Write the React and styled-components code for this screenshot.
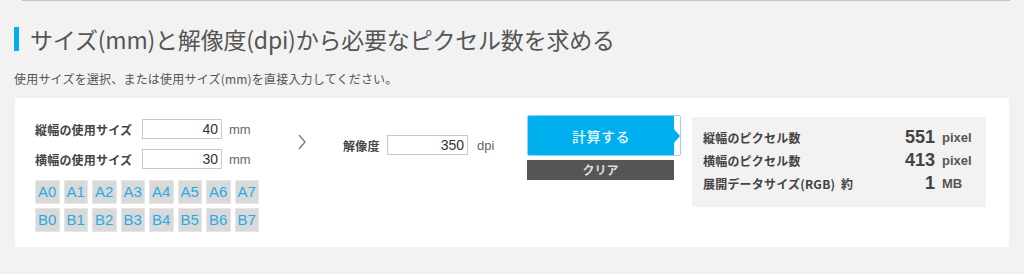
import styled, { createGlobalStyle } from 'styled-components';

const GlobalStyle = createGlobalStyle`
  body {
    margin: 0;
    background: #f2f2f2;
    font-family: "Noto Sans CJK JP", "Noto Sans", sans-serif;
    color: #555;
  }
`;

const Page = styled.div`
  width: 1010px;
  padding-left: 14px;
  box-sizing: border-box;
`;

const TopRule = styled.div`
  margin-left: 8px;
  height: 1px;
  background: #c4c4c4;
`;

const Heading = styled.h2`
  margin: 26px 0 0;
  padding-left: 11px;
  border-left: 5px solid #00aeef;
  font-size: 23px;
  font-weight: 400;
  line-height: 24px;
  color: #555;
  letter-spacing: -0.2px;
`;

const Lead = styled.p`
  margin: 20px 0 0;
  font-size: 12px;
  line-height: 16px;
  color: #555;
  letter-spacing: 0.2px;
`;

const Panel = styled.div`
  margin: 11px 0 0 1px;
  width: 994px;
  height: 149px;
  box-sizing: border-box;
  padding: 17px 0 0 20px;
  background: #fff;
  display: flex;
  align-items: flex-start;
`;

const SizeColumn = styled.div`
  width: 263px;
  margin-top: 4px;
`;

const FieldRow = styled.div`
  display: flex;
  align-items: center;
  height: 20px;
  margin-bottom: ${(p) => p.$gap || 0}px;
`;

const Label = styled.span`
  width: ${(p) => p.$width}px;
  font-size: 12px;
  font-weight: 700;
  color: #444;
  white-space: nowrap;
  letter-spacing: 0.2px;
`;

const NumberInput = styled.input`
  width: ${(p) => p.$width || 80}px;
  height: 20px;
  box-sizing: border-box;
  border: 1px solid #c8c8c8;
  padding: 0 3px;
  text-align: right;
  font-family: "Liberation Sans", Arial, sans-serif;
  font-size: 14px;
  color: #333;
  outline: none;
`;

const Unit = styled.span`
  margin-left: ${(p) => p.$gap || 7}px;
  font-family: "Liberation Sans", Arial, sans-serif;
  font-size: 13px;
  color: #666;
`;

const PaperGrid = styled.div`
  margin-top: 11px;
  width: 224px;
  display: grid;
  grid-template-columns: repeat(8, 1fr);
  grid-auto-rows: 24px;
  gap: 4px;
`;

const PaperButton = styled.button`
  padding: 0;
  border: 1px solid #e6e6e6;
  background: #d9d9d9;
  color: #2aaae4;
  font-family: "Liberation Sans", Arial, sans-serif;
  font-size: 15px;
  line-height: 22px;
  cursor: pointer;
`;

const Chevron = styled.svg`
  margin-top: 19px;
  flex: none;
`;

const ResolutionGroup = styled.div`
  width: 184px;
  margin: 20px 0 0 37px;
  display: flex;
  align-items: center;
  height: 20px;
`;

const Actions = styled.div`
  width: 154px;
  display: flex;
  flex-direction: column;
`;

const CalcButton = styled.button`
  position: relative;
  height: 41px;
  padding: 0 6px 0 0;
  border: 1px solid #a4cdf4;
  border-radius: 2px;
  background: linear-gradient(to right, #00b0ee calc(100% - 6px), #fff 0);
  color: #eef9fe;
  font-family: inherit;
  font-size: 14px;
  font-weight: 500;
  letter-spacing: 0.5px;
  cursor: pointer;

  &::after {
    content: '';
    position: absolute;
    top: 50%;
    left: calc(100% - 6px);
    margin-top: -7px;
    border-left: 6px solid #00b0ee;
    border-top: 7px solid transparent;
    border-bottom: 7px solid transparent;
  }
`;

const ClearButton = styled.button`
  margin-top: 4px;
  width: 147px;
  height: 20px;
  padding: 0;
  border: none;
  background: #555;
  color: #ddd;
  font-family: inherit;
  font-size: 12px;
  font-weight: 700;
  line-height: 20px;
  cursor: pointer;
`;

const Results = styled.div`
  margin: 2px 0 0 11px;
  width: 294px;
  height: 90px;
  box-sizing: border-box;
  padding: 9px 13px 0 11px;
  background: #f2f2f2;
`;

const ResultRow = styled.div`
  display: grid;
  grid-template-columns: 1fr auto 38px;
  align-items: center;
  height: 23px;
`;

const ResultLabel = styled.span`
  font-size: 12px;
  font-weight: 700;
  color: #444;
  white-space: pre;
  letter-spacing: 0.2px;
`;

const ResultValue = styled.span`
  text-align: right;
  font-family: "Liberation Sans", Arial, sans-serif;
  font-size: 18px;
  font-weight: 700;
  color: #444;
`;

const ResultUnit = styled.span`
  margin-left: 7px;
  font-family: "Liberation Sans", Arial, sans-serif;
  font-size: 13px;
  font-weight: 700;
  color: #555;
  white-space: nowrap;
`;

const papers = ['A0', 'A1', 'A2', 'A3', 'A4', 'A5', 'A6', 'A7', 'B0', 'B1', 'B2', 'B3', 'B4', 'B5', 'B6', 'B7'];

const results = [
  { label: '縦幅のピクセル数', value: '551', unit: 'pixel' },
  { label: '横幅のピクセル数', value: '413', unit: 'pixel' },
  { label: '展開データサイズ(RGB)  約', value: '1', unit: 'MB' },
];

export default function App() {
  return (
    <>
      <GlobalStyle />
      <Page>
        <TopRule />
        <Heading>サイズ(mm)と解像度(dpi)から必要なピクセル数を求める</Heading>
        <Lead>使用サイズを選択、または使用サイズ(mm)を直接入力してください。</Lead>
        <Panel>
          <SizeColumn>
            <FieldRow $gap={10}>
              <Label $width={107}>縦幅の使用サイズ</Label>
              <NumberInput defaultValue="40" />
              <Unit>mm</Unit>
            </FieldRow>
            <FieldRow>
              <Label $width={107}>横幅の使用サイズ</Label>
              <NumberInput defaultValue="30" />
              <Unit>mm</Unit>
            </FieldRow>
            <PaperGrid>
              {papers.map((p) => (
                <PaperButton key={p}>{p}</PaperButton>
              ))}
            </PaperGrid>
          </SizeColumn>
          <Chevron width="8" height="16" viewBox="0 0 8 16">
            <path d="M1 1 L7 8 L1 15" fill="none" stroke="#777" strokeWidth="1.3" />
          </Chevron>
          <ResolutionGroup>
            <Label $width={44}>解像度</Label>
            <NumberInput $width={81} defaultValue="350" />
            <Unit $gap={9}>dpi</Unit>
          </ResolutionGroup>
          <Actions>
            <CalcButton>計算する</CalcButton>
            <ClearButton>クリア</ClearButton>
          </Actions>
          <Results>
            {results.map((r) => (
              <ResultRow key={r.label}>
                <ResultLabel>{r.label}</ResultLabel>
                <ResultValue>{r.value}</ResultValue>
                <ResultUnit>{r.unit}</ResultUnit>
              </ResultRow>
            ))}
          </Results>
        </Panel>
      </Page>
    </>
  );
}
